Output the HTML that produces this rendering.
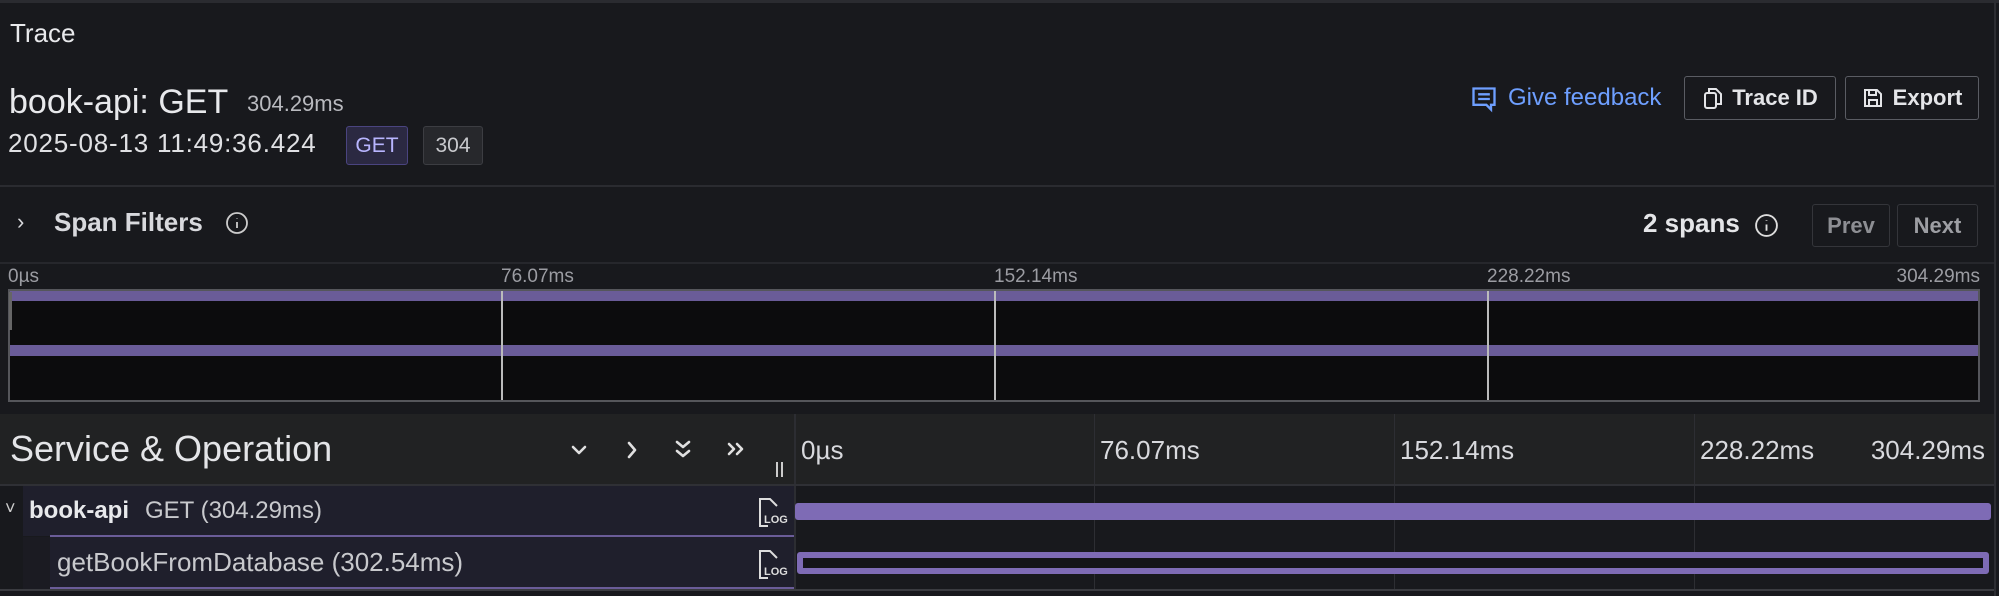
<!DOCTYPE html>
<html><head><meta charset="utf-8"><style>
*{margin:0;padding:0;box-sizing:border-box}
body{width:1999px;height:596px;background:#18191d;font-family:"Liberation Sans",sans-serif;color:#d8d9dd;position:relative;overflow:hidden}
.a{position:absolute;white-space:nowrap}
.btn{position:absolute;border:1.5px solid #5a5c63;border-radius:3px;display:flex;align-items:center;justify-content:center;font-size:22px;color:#e4e5e8;font-weight:bold}
.lbl{position:absolute;font-size:19px;color:#9b9ca2}
.th{position:absolute;font-size:26px;color:#d8d9dd;top:435px}
.vl{position:absolute;width:1px;background:#2d2e33}
</style></head><body>
<div class="a" style="left:0;top:0;width:1999px;height:3px;background:#2a2b30"></div>
<div class="a" style="left:1994px;top:0;width:2px;height:596px;background:#2c2d32"></div>
<div class="a" style="left:10px;top:18px;font-size:26px;color:#e8e9ec">Trace</div>
<div class="a" style="left:9px;top:83px;font-size:34px;color:#e8e9ec">book-api: GET</div>
<div class="a" style="left:247px;top:91px;font-size:22px;color:#b9babf">304.29ms</div>
<div class="a" style="left:8px;top:128px;font-size:26px;color:#e0e1e4;letter-spacing:0.8px">2025-08-13 11:49:36.424</div>
<div class="a" style="left:346px;top:126px;width:62px;height:39px;border:1.5px solid #4a4480;background:#2b2942;border-radius:3px;color:#b8b5ff;font-size:21px;display:flex;align-items:center;justify-content:center">GET</div>
<div class="a" style="left:423px;top:126px;width:60px;height:39px;border:1.5px solid #3c3d42;background:#27282c;border-radius:3px;color:#c8c9cd;font-size:21px;display:flex;align-items:center;justify-content:center">304</div>
<svg class="a" style="left:1470px;top:85px" width="28" height="28" viewBox="0 0 24 24" fill="none" stroke="#6e9fff" stroke-width="2"><path d="M3 3h18v14h-3v4l-4-4H3z"/><path d="M7 8h10M7 12h10"/></svg>
<div class="a" style="left:1508px;top:84px;font-size:24px;color:#6e9fff">Give feedback</div>
<div class="btn" style="left:1684px;top:76px;width:152px;height:44px"><svg width="22" height="24" viewBox="0 0 22 24" fill="none" stroke="#e4e5e8" stroke-width="2" style="margin-right:8px"><path d="M7 6V3h7l5 5v10h-4"/><rect x="3" y="7" width="11" height="15" rx="2"/></svg>Trace ID</div>
<div class="btn" style="left:1845px;top:76px;width:134px;height:44px"><svg width="22" height="22" viewBox="0 0 22 22" fill="none" stroke="#e4e5e8" stroke-width="2" style="margin-right:9px"><path d="M3 3h12l4 4v12H3z"/><path d="M7 3v5h7V3M7 19v-6h8v6"/></svg>Export</div>
<div class="a" style="left:0;top:185px;width:1994px;height:2px;background:#2a2b30"></div>
<div class="a" style="left:17px;top:209px;font-size:22px;color:#d8d9dd">›</div>
<div class="a" style="left:54px;top:207px;font-size:26px;font-weight:bold;color:#d8d9dd">Span Filters</div>
<svg class="a" style="left:225px;top:211px" width="24" height="24" viewBox="0 0 24 24" fill="none" stroke="#ccc" stroke-width="1.8"><circle cx="12" cy="12" r="10"/><path d="M12 11v6M12 7v.5"/></svg>
<div class="a" style="left:1643px;top:208px;font-size:26px;font-weight:bold;color:#e4e5e8">2 spans</div>
<svg class="a" style="left:1754px;top:213px" width="25" height="25" viewBox="0 0 24 24" fill="none" stroke="#ddd" stroke-width="1.8"><circle cx="12" cy="12" r="10"/><path d="M12 11v6M12 7v.5"/></svg>
<div class="btn" style="left:1812px;top:204px;width:78px;height:43px;color:#8d8e93;border-color:#34353a">Prev</div>
<div class="btn" style="left:1897px;top:204px;width:81px;height:43px;color:#9d9ea3;border-color:#34353a">Next</div>
<div class="a" style="left:0;top:262px;width:1994px;height:2px;background:#26272c"></div>
<div class="lbl" style="left:8px;top:266px">0µs</div>
<div class="lbl" style="left:501px;top:266px">76.07ms</div>
<div class="lbl" style="left:994px;top:266px">152.14ms</div>
<div class="lbl" style="left:1487px;top:266px">228.22ms</div>
<div class="lbl" style="right:19px;top:266px">304.29ms</div>
<div class="a" style="left:8px;top:289px;width:1972px;height:113px;background:#0c0c0d;border:2px solid #55565b"></div>
<div class="a" style="left:10px;top:291px;width:1968px;height:10px;background:#6a5c98"></div>
<div class="a" style="left:10px;top:345px;width:1968px;height:11px;background:#6a5c98"></div>
<div class="a" style="left:9px;top:292px;width:3px;height:38px;background:#666"></div>
<div class="a" style="left:501px;top:291px;width:2px;height:109px;background:#bbb"></div>
<div class="a" style="left:994px;top:291px;width:2px;height:109px;background:#bbb"></div>
<div class="a" style="left:1487px;top:291px;width:2px;height:109px;background:#bbb"></div>
<div class="a" style="left:0;top:414px;width:1994px;height:71px;background:#212223"></div>
<div class="a" style="left:10px;top:428px;font-size:36px;color:#e4e5e8">Service &amp; Operation</div>
<svg class="a" style="left:568px;top:438px;" width="200" height="24" viewBox="0 0 200 24" fill="none" stroke="#e0e0e0" stroke-width="2.6" stroke-linecap="round" stroke-linejoin="round"><path d="M5 9l6 6 6-6"/><path d="M61 5l6 7-6 7"/><path d="M109 4l6 5 6-5M109 13l6 5 6-5"/><path d="M161 6l5 5-5 5M169 6l5 5-5 5"/></svg>
<div class="a" style="left:776px;top:462px;width:2px;height:15px;background:#ccc"></div>
<div class="a" style="left:781px;top:462px;width:2px;height:15px;background:#ccc"></div>
<div class="a" style="left:794px;top:414px;width:2px;height:175px;background:#2c2d32"></div>
<div class="th" style="left:801px">0µs</div>
<div class="th" style="left:1100px">76.07ms</div>
<div class="th" style="left:1400px">152.14ms</div>
<div class="th" style="left:1700px">228.22ms</div>
<div class="th" style="right:14px">304.29ms</div>
<div class="vl" style="left:1094px;top:414px;height:175px"></div>
<div class="vl" style="left:1394px;top:414px;height:175px"></div>
<div class="vl" style="left:1694px;top:414px;height:175px"></div>
<div class="a" style="left:0;top:484px;width:1994px;height:2px;background:#2f3035"></div>
<div class="a" style="left:23px;top:486px;width:771px;height:50px;background:#1f1f2c"></div>
<div class="a" style="left:5px;top:498px;font-size:18px;color:#ccc">˅</div>
<div class="a" style="left:29px;top:497px;font-size:24px;font-weight:bold;color:#e8e9ec">book-api</div>
<div class="a" style="left:145px;top:497px;font-size:24px;color:#c8c9cd">GET (304.29ms)</div>
<div class="a" style="left:50px;top:535px;width:744px;height:2px;background:#6a5c98"></div>
<div class="a" style="left:23px;top:537px;width:27px;height:52px;background:#1b1b22"></div>
<div class="a" style="left:50px;top:537px;width:744px;height:50px;background:#1f1f2c"></div>
<div class="a" style="left:57px;top:547px;font-size:26px;color:#c8c9cd">getBookFromDatabase (302.54ms)</div>
<div class="a" style="left:50px;top:587px;width:744px;height:2px;background:#6a5c98"></div>
<svg class="a" style="left:756px;top:496px" width="32" height="32" viewBox="0 0 32 32" fill="none" stroke="#ddd" stroke-width="2"><path d="M12 30H4V3h10l7 7"/><text x="8" y="27" font-size="11" font-family="Liberation Sans" fill="#ddd" stroke="none" font-weight="bold">LOG</text></svg>
<svg class="a" style="left:756px;top:548px" width="32" height="32" viewBox="0 0 32 32" fill="none" stroke="#ddd" stroke-width="2"><path d="M12 30H4V3h10l7 7"/><text x="8" y="27" font-size="11" font-family="Liberation Sans" fill="#ddd" stroke="none" font-weight="bold">LOG</text></svg>
<div class="a" style="left:795px;top:503px;width:1196px;height:17px;background:#7e6bb5;border-radius:3px"></div>
<div class="a" style="left:797px;top:552px;width:1192px;height:22px;border:6px solid #7e6bb5;background:#141418;border-radius:3px"></div>
<div class="a" style="left:0;top:589px;width:1994px;height:2px;background:#3a3b40"></div>
</body></html>
